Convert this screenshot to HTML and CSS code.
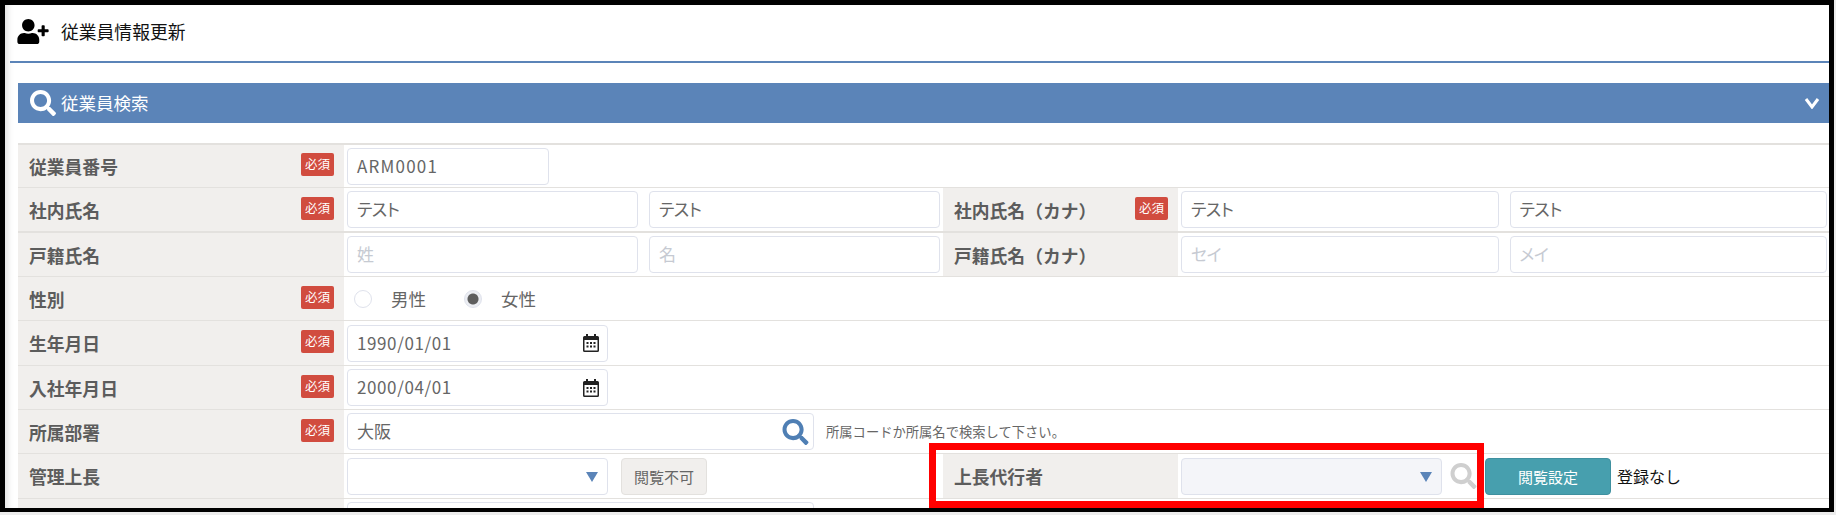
FILE: index.html
```html
<!DOCTYPE html>
<html lang="ja">
<head>
<meta charset="utf-8">
<title>従業員情報更新</title>
<link rel="stylesheet" href="styles.css">
</head>
<body>
<svg class="defs" width="0" height="0" aria-hidden="true">
  <symbol id="i-search" viewBox="0 0 512 512"><path d="M505 442.7L405.3 343c-4.5-4.5-10.6-7-17-7H372c27.6-35.3 44-79.7 44-128C416 93.1 322.9 0 208 0S0 93.1 0 208s93.1 208 208 208c48.3 0 92.7-16.4 128-44v16.3c0 6.4 2.5 12.5 7 17l99.7 99.7c9.4 9.4 24.6 9.4 33.9 0l28.3-28.3c9.4-9.4 9.4-24.6.1-34zM208 336c-70.7 0-128-57.2-128-128 0-70.7 57.2-128 128-128 70.7 0 128 57.2 128 128 0 70.7-57.2 128-128 128z"/></symbol>
  <symbol id="i-cal" viewBox="0 0 16 18"><path fill-rule="evenodd" d="M3 0h2v2h6V0h2v2h1.500A1.500 1.500 0 0 1 16 3.500v13a1.500 1.500 0 0 1-1.500 1.500h-13A1.500 1.500 0 0 1 0 16.500v-13A1.500 1.500 0 0 1 1.500 2H3zM1.500 6v10.500h13V6zM3.500 8h2v2h-2zM7 8h2v2H7zM10.500 8h2v2h-2zM3.500 11.500h2v2h-2zM7 11.500h2v2H7zM10.500 11.500h2v2h-2z"/></symbol>
</svg>
<div class="frame">
  <header class="page-head">
    <svg class="i-user" viewBox="0 0 640 512"><path d="M624 208h-64v-64c0-8.800-7.200-16-16-16h-32c-8.800 0-16 7.200-16 16v64h-64c-8.800 0-16 7.200-16 16v32c0 8.800 7.200 16 16 16h64v64c0 8.800 7.200 16 16 16h32c8.800 0 16-7.200 16-16v-64h64c8.800 0 16-7.200 16-16v-32c0-8.800-7.200-16-16-16zm-400 48c70.700 0 128-57.300 128-128S294.700 0 224 0 96 57.300 96 128s57.300 128 128 128zm89.600 32h-16.700c-22.200 10.200-46.900 16-72.900 16s-50.600-5.800-72.900-16h-16.700C60.200 288 0 348.200 0 422.400V464c0 26.500 21.500 48 48 48h352c26.500 0 48-21.500 48-48v-41.600c0-74.200-60.200-134.400-134.400-134.400z"/></svg>
    <h1 class="page-title">従業員情報更新</h1>
  </header>
  <main class="content">
    <div class="bar">
      <svg class="i-bar"><use href="#i-search"/></svg>
      <h2 class="bar-title">従業員検索</h2>
      <svg class="i-chev" viewBox="0 0 16 12"><path d="M2 2l6 8 6-8"/></svg>
    </div>
    <div class="form">
      <div class="row row-short">
        <div class="label"><span>従業員番号</span><em class="req">必須</em></div>
        <div class="cell span-all"><div class="field w-code code">ARM0001</div></div>
      </div>
      <div class="row row-thick">
        <div class="label"><span>社内氏名</span><em class="req">必須</em></div>
        <div class="cell"><div class="field grow kana">テスト</div><div class="field grow kana">テスト</div></div>
        <div class="label"><span>社内氏名（カナ）</span><em class="req">必須</em></div>
        <div class="cell cell-end"><div class="field grow kana">テスト</div><div class="field grow kana">テスト</div></div>
      </div>
      <div class="row">
        <div class="label"><span>戸籍氏名</span></div>
        <div class="cell"><div class="field grow ph">姓</div><div class="field grow ph">名</div></div>
        <div class="label"><span>戸籍氏名（カナ）</span></div>
        <div class="cell cell-end"><div class="field grow ph kana">セイ</div><div class="field grow ph kana">メイ</div></div>
      </div>
      <div class="row">
        <div class="label"><span>性別</span><em class="req">必須</em></div>
        <div class="cell span-all radios">
          <span class="radio"></span><span class="radio-text">男性</span>
          <span class="radio on"></span><span class="radio-text">女性</span>
        </div>
      </div>
      <div class="row row-tall">
        <div class="label"><span>生年月日</span><em class="req">必須</em></div>
        <div class="cell span-all"><div class="field w-date date"><span>1990/01/01</span><svg class="i-cal"><use href="#i-cal"/></svg></div></div>
      </div>
      <div class="row">
        <div class="label"><span>入社年月日</span><em class="req">必須</em></div>
        <div class="cell span-all"><div class="field w-date date"><span>2000/04/01</span><svg class="i-cal"><use href="#i-cal"/></svg></div></div>
      </div>
      <div class="row">
        <div class="label"><span>所属部署</span><em class="req">必須</em></div>
        <div class="cell span-all">
          <div class="field w-dept"><span>大阪</span><svg class="i-find"><use href="#i-search"/></svg></div>
          <span class="note">所属コードか所属名で検索して下さい。</span>
        </div>
      </div>
      <div class="row row-tall">
        <div class="label"><span>管理上長</span></div>
        <div class="cell gap-13"><div class="field w-date"><i class="caret"></i></div><div class="btn btn-off">閲覧不可</div></div>
        <div class="label"><span>上長代行者</span></div>
        <div class="cell cell-proxy">
          <div class="field w-date off"><i class="caret"></i></div>
          <svg class="i-find-off"><use href="#i-search"/></svg>
          <div class="btn btn-teal">閲覧設定</div>
          <span class="status">登録なし</span>
        </div>
      </div>
      <div class="row row-last">
        <div class="label"></div>
        <div class="cell span-all cell-top"><div class="field w-dept field-end"><svg class="i-find"><use href="#i-search"/></svg></div></div>
      </div>
    </div>
  </main>
  <div class="highlight"></div>
</div>
</body>
</html>
```

FILE: styles.css
```css
* { box-sizing: border-box; }
html, body { margin: 0; padding: 0; }
body {
  width: 1836px;
  height: 515px;
  overflow: hidden;
  background: #ececec;
  font-family: "Noto Sans CJK JP", "Noto Sans", sans-serif;
  color: #5f5f5f;
}
.defs { position: absolute; }
.frame {
  position: relative;
  width: 1834px;
  height: 512px;
  border: 5px solid #000;
  border-bottom-width: 4px;
  background: #fff;
  overflow: hidden;
  box-shadow: inset 7px 0 7px -5px #dcdcdc;
}
.page-head {
  height: 58px;
  margin-left: 5px;
  border-bottom: 2px solid #5b84b8;
  display: flex;
  align-items: center;
  padding: 0 0 4px 7px;
}
.i-user { width: 32px; height: 25px; fill: #000; flex: none; }
.page-title {
  margin: 0 0 0 12px;
  font-size: 17.800px;
  font-weight: 400;
  line-height: 24px;
  color: #111;
}
.content { padding: 20px 0 0 13px; }
.bar {
  height: 40px;
  background: #5b84b8;
  display: flex;
  align-items: center;
  padding: 0 9px 0 12px;
  color: #fff;
}
.i-bar { width: 26px; height: 26px; fill: #fff; flex: none; }
.bar-title {
  margin: 0 0 0 5px;
  font-size: 17.500px;
  font-weight: 400;
  line-height: 24px;
  flex: 1;
}
.i-chev { width: 16px; height: 12px; fill: none; stroke: #fff; stroke-width: 3; }
.form { margin-top: 20px; border-top: 2px solid #e3e1de; }
.row {
  display: grid;
  grid-template-columns: 326px 599px 235px 1fr;
  height: 44px;
  border-bottom: 1px solid #e3e1de;
}
.row-short { height: 43px; }
.row-tall { height: 45px; }
.row-thick { height: 45px; border-bottom-width: 2px; }
.row-last { height: 30px; border-bottom: 0; }
.label {
  background: #f1efed;
  display: flex;
  align-items: center;
  justify-content: space-between;
  padding: 0 10px 0 11px;
  font-size: 17.800px;
  font-weight: 700;
  color: #5c5c5c;
}
.req {
  width: 33px;
  height: 23px;
  border-radius: 2px;
  background: #d14c3f;
  color: #fff;
  font-style: normal;
  font-weight: 400;
  font-size: 12.500px;
  line-height: 22px;
  text-align: center;
  margin-top: -3px;
}
.cell {
  display: flex;
  align-items: center;
  gap: 11px;
  padding: 0 3px;
  min-width: 0;
}
.span-all { grid-column: 2 / -1; }
.cell-end { padding-right: 2px; }
.cell-top { align-items: flex-start; padding-top: 3px; }
.gap-13 { gap: 13px; }
.cell-proxy { gap: 8px; }
.field {
  height: 37px;
  border: 1px solid #dfe2ec;
  border-radius: 4px;
  background: #fff;
  display: flex;
  align-items: center;
  justify-content: space-between;
  padding: 0 10px 2px 9px;
  font-size: 17px;
  color: #666;
  white-space: nowrap;
  flex: none;
}
.field-end { justify-content: flex-end; }
.grow { flex: 1 1 0; }
.kana { font-feature-settings: "palt"; letter-spacing: -0.5px; }
.code { letter-spacing: 1.2px; }
.date { letter-spacing: 0.6px; }
.ph { color: #c6cad2; }
.w-code { width: 202px; }
.w-date { width: 261px; }
.w-dept { width: 467px; }
.off { background: #f4f5f9; }
.i-cal { width: 16px; height: 18px; fill: #222; flex: none; margin-right: -2px; margin-top: 2px; }
.i-find { width: 27px; height: 26px; fill: #4f7fb4; margin-right: -6px; margin-top: 2px; }
.i-find-off { width: 27px; height: 26px; fill: #cfcfcf; flex: none; }
.caret {
  margin-left: auto;
  margin-right: -1px;
  margin-top: 4px;
  width: 0;
  height: 0;
  border-left: 6px solid transparent;
  border-right: 6px solid transparent;
  border-top: 10px solid #5b84b8;
}
.note { font-size: 13.300px; color: #666; margin-left: 1px; }
.radios { gap: 0; padding-left: 10px; font-size: 17.500px; color: #666; }
.radio {
  width: 18px;
  height: 18px;
  border-radius: 50%;
  border: 1px solid #dfe2ec;
  background: #fff;
  flex: none;
  margin-right: 19px;
}
.radio.on {
  background: radial-gradient(circle at center, #5e5e5e 0 5px, #eceef3 6px);
}
.radio-text { margin-right: 38px; }
.btn {
  height: 37px;
  border-radius: 4px;
  display: flex;
  align-items: center;
  justify-content: center;
  font-size: 15px;
  flex: none;
}
.btn-off { width: 86px; background: #f1efed; border: 1px solid #e3e1de; color: #666; }
.btn-teal { width: 126px; background: #479fae; border: 1px solid #3f909f; color: #fff; }
.status { font-size: 16px; color: #111; margin-left: -2px; }
.highlight {
  position: absolute;
  left: 924px;
  top: 438px;
  width: 555px;
  height: 65px;
  border: 7px solid #f00;
}
```
